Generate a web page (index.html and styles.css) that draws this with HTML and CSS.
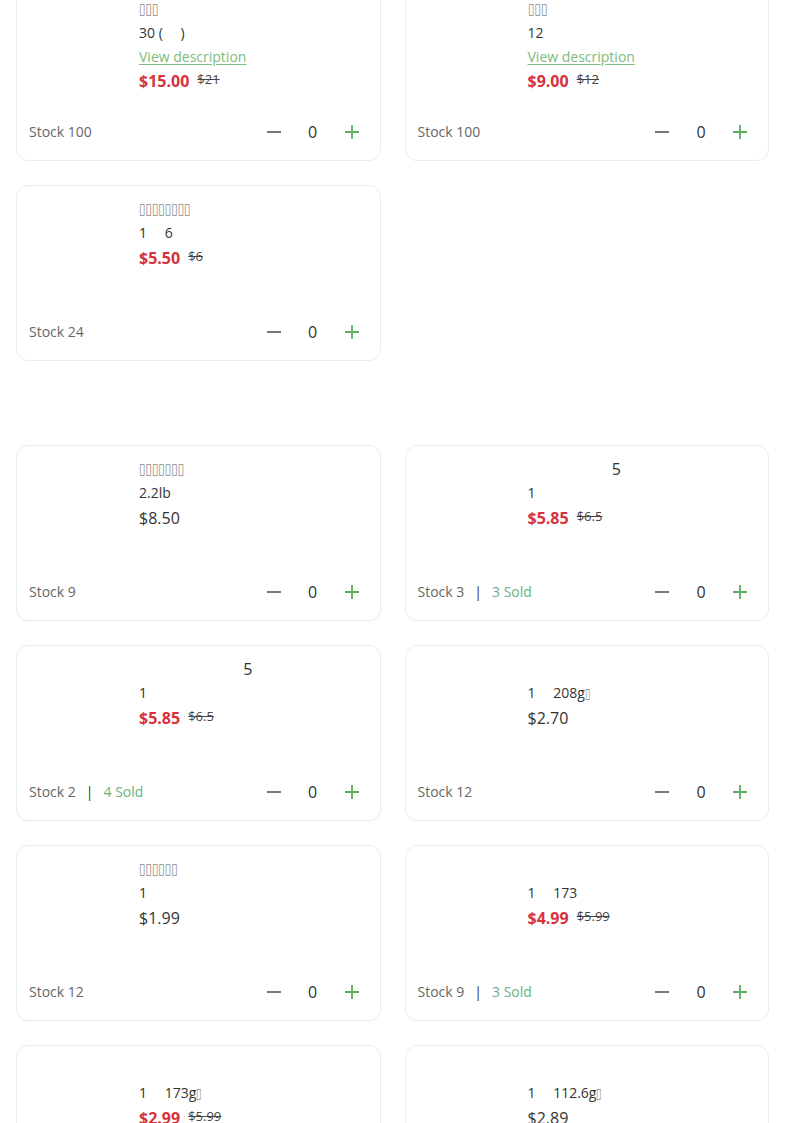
FILE: index.html
```html
<!DOCTYPE html>
<html>
<head>
<meta charset="utf-8">
<link rel="stylesheet" href="styles.css">
</head>
<body>
<main class="list">
  <section class="grid">
    <article class="card">
      <div class="card-body">
        <div class="thumb"></div>
        <div class="info">
          <div class="title"><span class="tofu">▯▯▯</span></div>
          <div class="spec">30 (&#x3000;&nbsp;)</div>
          <a class="desc" href="#">View description</a>
          <div class="price"><span class="sale">$15.00</span><span class="orig">$21</span></div>
        </div>
      </div>
      <div class="card-foot">
        <div class="stock">Stock 100</div>
        <div class="counter">
          <button class="btn minus"><svg width="16" height="16" viewBox="0 0 16 16"><path d="M1 8h14" stroke="#555" stroke-width="1.6"/></svg></button>
          <span class="qty">0</span>
          <button class="btn plus"><svg width="16" height="16" viewBox="0 0 16 16"><path d="M1 8h14M8 1v14" stroke="#5cae5e" stroke-width="1.8"/></svg></button>
        </div>
      </div>
    </article>
    <article class="card">
      <div class="card-body">
        <div class="thumb"></div>
        <div class="info">
          <div class="title"><span class="tofu">▯▯▯</span></div>
          <div class="spec">12</div>
          <a class="desc" href="#">View description</a>
          <div class="price"><span class="sale">$9.00</span><span class="orig">$12</span></div>
        </div>
      </div>
      <div class="card-foot">
        <div class="stock">Stock 100</div>
        <div class="counter">
          <button class="btn minus"><svg width="16" height="16" viewBox="0 0 16 16"><path d="M1 8h14" stroke="#555" stroke-width="1.6"/></svg></button>
          <span class="qty">0</span>
          <button class="btn plus"><svg width="16" height="16" viewBox="0 0 16 16"><path d="M1 8h14M8 1v14" stroke="#5cae5e" stroke-width="1.8"/></svg></button>
        </div>
      </div>
    </article>
    <article class="card">
      <div class="card-body">
        <div class="thumb"></div>
        <div class="info">
          <div class="title"><span class="tofu">▯▯▯▯▯▯▯▯</span></div>
          <div class="spec">1&#x3000;&nbsp;6</div>
          <div class="price"><span class="sale">$5.50</span><span class="orig">$6</span></div>
        </div>
      </div>
      <div class="card-foot">
        <div class="stock">Stock 24</div>
        <div class="counter">
          <button class="btn minus"><svg width="16" height="16" viewBox="0 0 16 16"><path d="M1 8h14" stroke="#555" stroke-width="1.6"/></svg></button>
          <span class="qty">0</span>
          <button class="btn plus"><svg width="16" height="16" viewBox="0 0 16 16"><path d="M1 8h14M8 1v14" stroke="#5cae5e" stroke-width="1.8"/></svg></button>
        </div>
      </div>
    </article>
  </section>

  <section class="grid">
    <article class="card">
      <div class="card-body">
        <div class="thumb"></div>
        <div class="info">
          <div class="title"><span class="tofu">▯▯▯▯▯▯▯</span></div>
          <div class="spec">2.2lb</div>
          <div class="price"><span class="regular">$8.50</span></div>
        </div>
      </div>
      <div class="card-foot">
        <div class="stock">Stock 9</div>
        <div class="counter">
          <button class="btn minus"><svg width="16" height="16" viewBox="0 0 16 16"><path d="M1 8h14" stroke="#555" stroke-width="1.6"/></svg></button>
          <span class="qty">0</span>
          <button class="btn plus"><svg width="16" height="16" viewBox="0 0 16 16"><path d="M1 8h14M8 1v14" stroke="#5cae5e" stroke-width="1.8"/></svg></button>
        </div>
      </div>
    </article>
    <article class="card">
      <div class="card-body">
        <div class="thumb"></div>
        <div class="info">
          <div class="title title-lg">&#x3000;&#x3000;&#x3000;&#x3000;&#x3000;&nbsp;5</div>
          <div class="spec">1</div>
          <div class="price"><span class="sale">$5.85</span><span class="orig">$6.5</span></div>
        </div>
      </div>
      <div class="card-foot">
        <div class="stock">Stock 3<span class="sep">|</span><span class="sold">3 Sold</span></div>
        <div class="counter">
          <button class="btn minus"><svg width="16" height="16" viewBox="0 0 16 16"><path d="M1 8h14" stroke="#555" stroke-width="1.6"/></svg></button>
          <span class="qty">0</span>
          <button class="btn plus"><svg width="16" height="16" viewBox="0 0 16 16"><path d="M1 8h14M8 1v14" stroke="#5cae5e" stroke-width="1.8"/></svg></button>
        </div>
      </div>
    </article>
    <article class="card">
      <div class="card-body">
        <div class="thumb"></div>
        <div class="info">
          <div class="title title-lg">&#x3000;&#x3000;&#x3000;&#x3000;&#x3000;&#x3000;&nbsp;&nbsp;5</div>
          <div class="spec">1</div>
          <div class="price"><span class="sale">$5.85</span><span class="orig">$6.5</span></div>
        </div>
      </div>
      <div class="card-foot">
        <div class="stock">Stock 2<span class="sep">|</span><span class="sold">4 Sold</span></div>
        <div class="counter">
          <button class="btn minus"><svg width="16" height="16" viewBox="0 0 16 16"><path d="M1 8h14" stroke="#555" stroke-width="1.6"/></svg></button>
          <span class="qty">0</span>
          <button class="btn plus"><svg width="16" height="16" viewBox="0 0 16 16"><path d="M1 8h14M8 1v14" stroke="#5cae5e" stroke-width="1.8"/></svg></button>
        </div>
      </div>
    </article>
    <article class="card">
      <div class="card-body">
        <div class="thumb"></div>
        <div class="info">
          <div class="title"></div>
          <div class="spec">1&#x3000;&nbsp;208g<span class="tofu-sm">▯</span></div>
          <div class="price"><span class="regular">$2.70</span></div>
        </div>
      </div>
      <div class="card-foot">
        <div class="stock">Stock 12</div>
        <div class="counter">
          <button class="btn minus"><svg width="16" height="16" viewBox="0 0 16 16"><path d="M1 8h14" stroke="#555" stroke-width="1.6"/></svg></button>
          <span class="qty">0</span>
          <button class="btn plus"><svg width="16" height="16" viewBox="0 0 16 16"><path d="M1 8h14M8 1v14" stroke="#5cae5e" stroke-width="1.8"/></svg></button>
        </div>
      </div>
    </article>
    <article class="card">
      <div class="card-body">
        <div class="thumb"></div>
        <div class="info">
          <div class="title"><span class="tofu">▯▯▯▯▯▯</span></div>
          <div class="spec">1</div>
          <div class="price"><span class="regular">$1.99</span></div>
        </div>
      </div>
      <div class="card-foot">
        <div class="stock">Stock 12</div>
        <div class="counter">
          <button class="btn minus"><svg width="16" height="16" viewBox="0 0 16 16"><path d="M1 8h14" stroke="#555" stroke-width="1.6"/></svg></button>
          <span class="qty">0</span>
          <button class="btn plus"><svg width="16" height="16" viewBox="0 0 16 16"><path d="M1 8h14M8 1v14" stroke="#5cae5e" stroke-width="1.8"/></svg></button>
        </div>
      </div>
    </article>
    <article class="card">
      <div class="card-body">
        <div class="thumb"></div>
        <div class="info">
          <div class="title"></div>
          <div class="spec">1&#x3000;&nbsp;173</div>
          <div class="price"><span class="sale">$4.99</span><span class="orig">$5.99</span></div>
        </div>
      </div>
      <div class="card-foot">
        <div class="stock">Stock 9<span class="sep">|</span><span class="sold">3 Sold</span></div>
        <div class="counter">
          <button class="btn minus"><svg width="16" height="16" viewBox="0 0 16 16"><path d="M1 8h14" stroke="#555" stroke-width="1.6"/></svg></button>
          <span class="qty">0</span>
          <button class="btn plus"><svg width="16" height="16" viewBox="0 0 16 16"><path d="M1 8h14M8 1v14" stroke="#5cae5e" stroke-width="1.8"/></svg></button>
        </div>
      </div>
    </article>
    <article class="card">
      <div class="card-body">
        <div class="thumb"></div>
        <div class="info">
          <div class="title"></div>
          <div class="spec">1&#x3000;&nbsp;173g<span class="tofu-sm">▯</span></div>
          <div class="price"><span class="sale">$2.99</span><span class="orig">$5.99</span></div>
        </div>
      </div>
      <div class="card-foot">
        <div class="stock">Stock 5</div>
        <div class="counter">
          <button class="btn minus"><svg width="16" height="16" viewBox="0 0 16 16"><path d="M1 8h14" stroke="#555" stroke-width="1.6"/></svg></button>
          <span class="qty">0</span>
          <button class="btn plus"><svg width="16" height="16" viewBox="0 0 16 16"><path d="M1 8h14M8 1v14" stroke="#5cae5e" stroke-width="1.8"/></svg></button>
        </div>
      </div>
    </article>
    <article class="card">
      <div class="card-body">
        <div class="thumb"></div>
        <div class="info">
          <div class="title"></div>
          <div class="spec">1&#x3000;&nbsp;112.6g<span class="tofu-sm">▯</span></div>
          <div class="price"><span class="regular">$2.89</span></div>
        </div>
      </div>
      <div class="card-foot">
        <div class="stock">Stock 8</div>
        <div class="counter">
          <button class="btn minus"><svg width="16" height="16" viewBox="0 0 16 16"><path d="M1 8h14" stroke="#555" stroke-width="1.6"/></svg></button>
          <span class="qty">0</span>
          <button class="btn plus"><svg width="16" height="16" viewBox="0 0 16 16"><path d="M1 8h14M8 1v14" stroke="#5cae5e" stroke-width="1.8"/></svg></button>
        </div>
      </div>
    </article>
  </section>
</main>
</body>
</html>
```

FILE: styles.css
```css
* { box-sizing: border-box; }

html, body {
  margin: 0;
  padding: 0;
  background: #ffffff;
}

body {
  font-family: "Open Sans", "Noto Sans CJK SC", sans-serif;
  color: #333333;
  font-size: 14px;
}

.list {
  padding: 0 16px;
  margin-top: -15px;
  display: flex;
  flex-direction: column;
  gap: 84px;
}

.grid {
  display: grid;
  grid-template-columns: 1fr 1fr;
  column-gap: 24px;
  row-gap: 24px;
}

.card {
  height: 176px;
  border: 1px solid #ebebeb;
  border-radius: 12px;
  background: #fff;
  display: flex;
  flex-direction: column;
  padding: 11px 12px 13px 12px;
}

.card-body {
  flex: 1;
  display: flex;
  gap: 10px;
  min-height: 0;
}

.thumb {
  width: 100px;
  flex: none;
}

.info {
  display: flex;
  flex-direction: column;
  min-width: 0;
}

.title {
  font-size: 12px;
  line-height: 24px;
  height: 24px;
  color: #666;
  white-space: nowrap;
}

.tofu {
  display: inline-block;
  font-family: "DejaVu Sans", sans-serif;
  font-size: 15px;
  line-height: 24px;
  letter-spacing: -0.2px;
  color: #888;
  transform: scaleX(0.8);
  transform-origin: 0 50%;
}

.tofu-sm {
  display: inline-block;
  font-family: "DejaVu Sans", sans-serif;
  font-size: 14px;
  line-height: 1;
  color: #888;
  transform: scaleX(0.7);
  transform-origin: 0 50%;
}

.title-lg {
  font-size: 16px;
  color: #333;
}

.spec {
  font-size: 14px;
  line-height: 24px;
  height: 24px;
  color: #333;
  white-space: nowrap;
}

.desc {
  font-size: 14px;
  line-height: 23px;
  color: #7dbb7f;
  text-decoration: underline;
  text-underline-offset: 2px;
}

.price {
  line-height: 26px;
  display: flex;
  align-items: center;
  gap: 8px;
}

.sale {
  font-size: 16px;
  font-weight: 700;
  color: #d8313a;
}

.regular {
  font-size: 16px;
  color: #333;
}

.orig {
  font-size: 13px;
  line-height: 18px;
  color: #444;
  text-decoration: line-through;
  margin-bottom: 4px;
}

.card-foot {
  display: flex;
  align-items: center;
  justify-content: space-between;
  height: 32px;
}

.stock {
  font-size: 14px;
  color: #666;
  display: flex;
  align-items: center;
}

.sep {
  color: #333;
  margin: 0 10px;
}

.sold {
  color: #66b280;
}

.counter {
  display: flex;
  align-items: center;
  margin-top: 2px;
}

.btn {
  width: 32px;
  height: 32px;
  border: 0;
  padding: 0;
  background: transparent;
  display: flex;
  align-items: center;
  justify-content: center;
}

.btn svg { display: block; }

.minus { margin-left: 1px; }

.qty {
  width: 46px;
  text-align: center;
  font-size: 16px;
  color: #333;
}
```
